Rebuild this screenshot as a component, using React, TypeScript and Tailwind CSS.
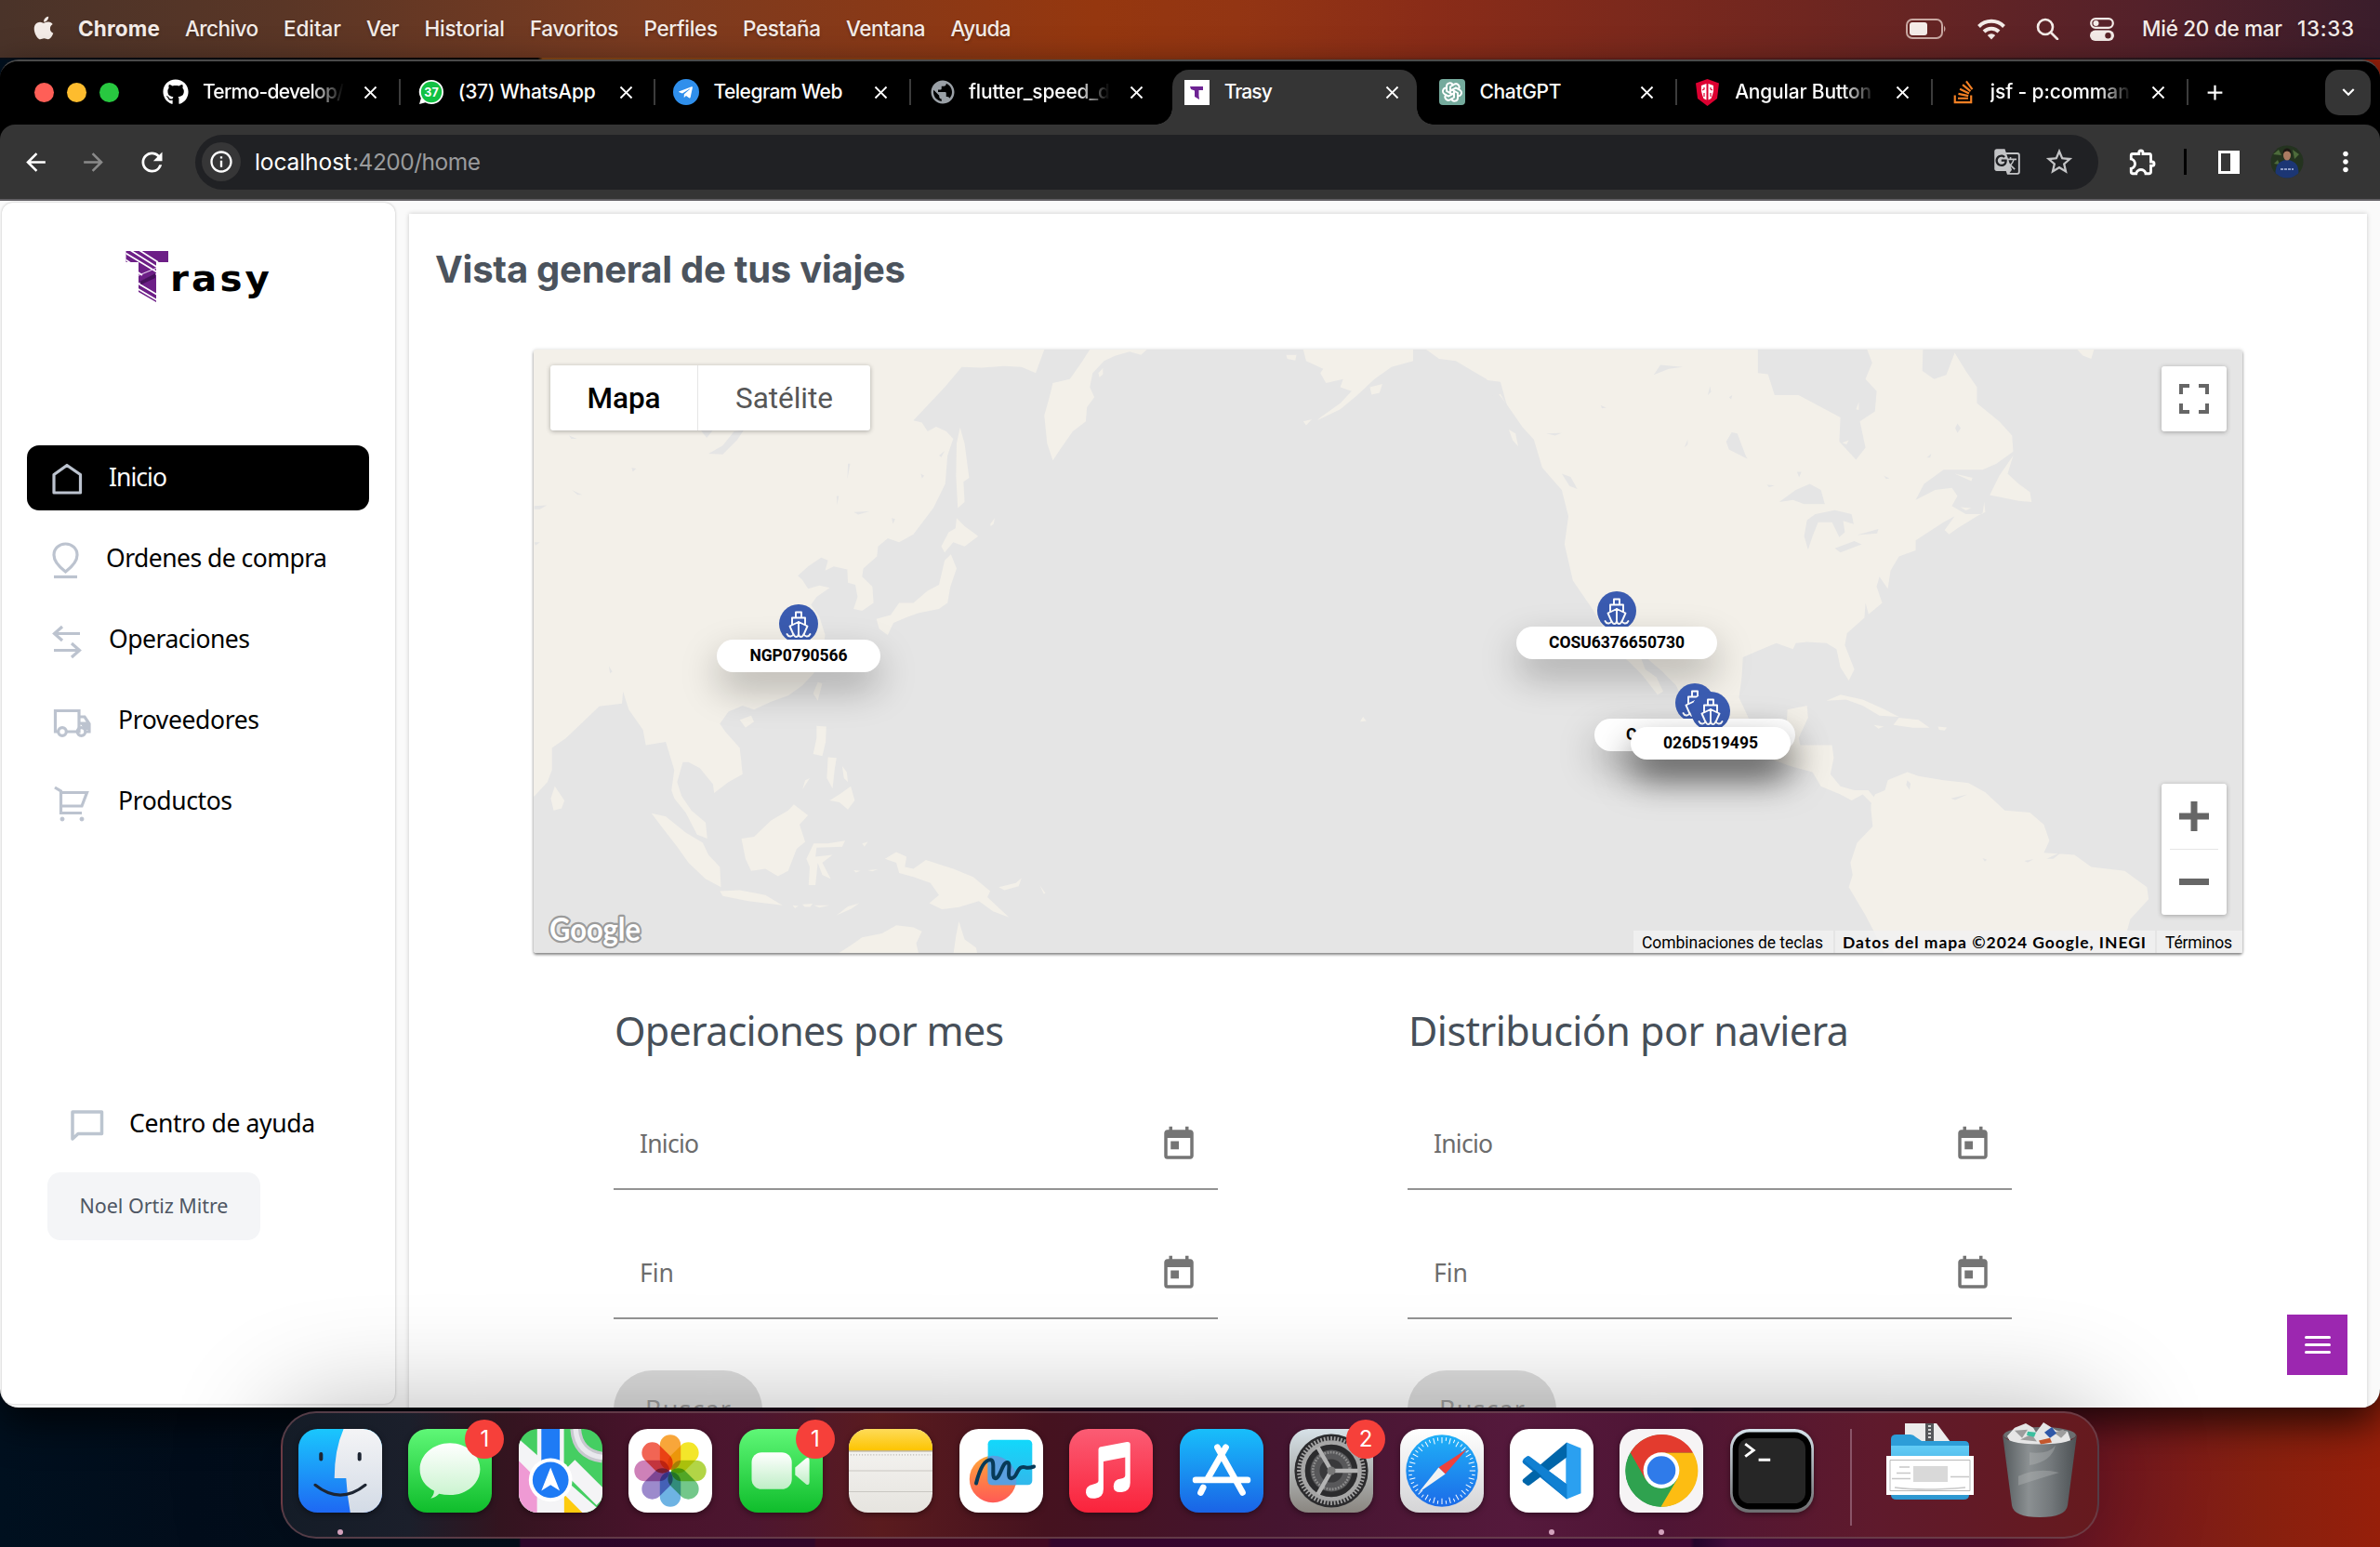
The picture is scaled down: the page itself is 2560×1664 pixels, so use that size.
import React, { useLayoutEffect, useRef, useState } from "react";
import { FaApple, FaGithub, FaTelegramPlane, FaStackOverflow } from "react-icons/fa";
import { TbBrandOpenai } from "react-icons/tb";
import {
  MdGTranslate,
  MdStarBorder,
  MdOutlineExtension,
  MdArrowBack,
  MdArrowForward,
  MdRefresh,
  MdInfoOutline,
  MdClose,
  MdAdd,
  MdKeyboardArrowDown,
  MdMoreVert,
  MdToday,
  MdPublic,
} from "react-icons/md";

/** A single line of text whose letter spacing is adjusted to fill a given width. */
function Fit({ w, className = "", children }: { w: number; className?: string; children: string }) {
  const ref = useRef<HTMLSpanElement>(null);
  const [ls, setLs] = useState(0);
  useLayoutEffect(() => {
    const el = ref.current;
    if (!el) return;
    const natural = el.getBoundingClientRect().width;
    setLs((w - natural) / Math.max(1, children.length - 1));
  }, [w, children]);
  return (
    <span className={`block shrink-0 ${className}`} style={{ width: w }}>
      <span ref={ref} className="inline-block whitespace-pre" style={{ letterSpacing: ls }}>
        {children}
      </span>
    </span>
  );
}

/* ------------------------------ menu bar ------------------------------ */

const menus: [string, number][] = [
  ["Archivo", 79],
  ["Editar", 62],
  ["Ver", 35.5],
  ["Historial", 86.5],
  ["Favoritos", 95.5],
  ["Perfiles", 79.5],
  ["Pestaña", 84],
  ["Ventana", 85.5],
  ["Ayuda", 65],
];

function MenuBar() {
  return (
    <div className="flex h-[62px] shrink-0 items-center justify-between bg-[linear-gradient(90deg,#4a3329_0%,#5a3626_12%,#7b3b20_27%,#95370f_46%,#933513_52%,#8a2c18_60%,#6f2620_76%,#54212a_90%,#3a1d2b_100%)] pl-[33px] pr-[28px] text-[22.5px] font-medium text-[#f4ece8] [text-shadow:0_2px_3px_rgba(0,0,0,0.25)]">
      <div className="flex items-center">
        <FaApple className="mb-[3px] size-[28px]" />
        <div className="ml-[23px] flex gap-[27px]">
          <Fit w={88} className="font-bold">Chrome</Fit>
          {menus.map(([m, w]) => (
            <Fit key={m} w={w}>{m}</Fit>
          ))}
        </div>
      </div>
      <div className="flex items-center">
        <svg width="44" height="22" viewBox="0 0 44 22" fill="none">
          <rect x="1" y="1" width="38" height="20" rx="6" stroke="#c9a8a2" strokeWidth="2" />
          <rect x="4" y="4" width="19" height="14" rx="3" fill="#f4ece8" />
          <path d="M41 7.500q3 3.500 0 7z" fill="#c9a8a2" />
        </svg>
        <svg width="32" height="24" viewBox="0 0 32 24" className="ml-[32px]" fill="none" stroke="#f4ece8" strokeWidth="4">
          <path d="M2.500 9.500a19 19 0 0 1 27 0" />
          <path d="M8 15a11.500 11.500 0 0 1 16 0" />
          <path d="M11.800 19a6 6 0 0 1 8.400 0L16 23.500z" fill="#f4ece8" stroke="none" />
        </svg>
        <svg width="25" height="24" viewBox="0 0 25 24" className="ml-[32px]" fill="none" stroke="#f4ece8" strokeWidth="2.600">
          <circle cx="10" cy="10" r="8" />
          <path d="M16 16l7 7" strokeLinecap="round" />
        </svg>
        <svg width="26" height="25" viewBox="0 0 26 25" className="ml-[33px]">
          <rect x="1.200" y="1.200" width="23.600" height="9.600" rx="4.800" fill="none" stroke="#f4ece8" strokeWidth="2.200" />
          <circle cx="6.500" cy="6" r="3" fill="#f4ece8" />
          <rect x="0" y="13.500" width="26" height="11.500" rx="5.700" fill="#f4ece8" />
          <circle cx="19.500" cy="19.200" r="3.200" fill="#5a2427" />
        </svg>
        <Fit w={151} className="ml-[30px]">Mié 20 de mar</Fit>
        <Fit w={61} className="ml-[16px]">13:33</Fit>
      </div>
    </div>
  );
}

/* ------------------------------ browser ------------------------------- */

type TabData = { icon: React.ReactNode; title: string; w: number; fade?: boolean; active?: boolean; sep?: boolean };

const tabs: TabData[] = [
  { icon: <FaGithub className="size-[28px] text-white" />, title: "Termo-develop/", w: 152, fade: true, sep: true },
  {
    icon: (
      <svg width="28" height="28" viewBox="0 0 28 28">
        <path d="M14 1a13 13 0 0 1 0 26q-3.500 0-6.500-1.700L1 27l1.800-6.200A13 13 0 0 1 14 1z" fill="#fff" />
        <circle cx="14" cy="14" r="11.200" fill="#12c143" />
        <text x="14" y="18.500" fontSize="12.500" fontWeight="700" fontFamily="Inter" fill="#fff" textAnchor="middle">37</text>
      </svg>
    ),
    title: "(37) WhatsApp",
    w: 148,
    sep: true,
  },
  {
    icon: (
      <span className="flex size-[28px] items-center justify-center rounded-full bg-[#2f8fec]">
        <FaTelegramPlane className="mr-[2px] size-[17px] text-white" />
      </span>
    ),
    title: "Telegram Web",
    w: 139,
    sep: true,
  },
  { icon: <MdPublic className="size-[30px] text-[#9aa0a6]" />, title: "flutter_speed_d", w: 152, fade: true },
  {
    icon: (
      <svg width="27" height="27" viewBox="0 0 27 27">
        <rect width="27" height="27" fill="#fff" />
        <path d="M6 7h14v4h-4.500v6l.5 4-5-3v-6.500L7 10z" fill="#6d2393" />
      </svg>
    ),
    title: "Trasy",
    w: 52,
    active: true,
  },
  {
    icon: (
      <span className="flex size-[28px] items-center justify-center rounded-[4px] bg-[#74aa9c]">
        <TbBrandOpenai className="size-[24px] text-white" />
      </span>
    ),
    title: "ChatGPT",
    w: 88,
    sep: true,
  },
  {
    icon: (
      <svg width="27" height="29" viewBox="0 0 27 29">
        <path d="M13.500 0L26 4.500 24 21l-10.500 8L3 21 1 4.500z" fill="#dd0031" />
        <path d="M7 7l5.500-2v17.500L9.500 21 8 17l-1-4zM20 7l-5.500-2v17.500l3-1.500 1.500-4 1-4z" fill="#fff" />
        <path d="M10 9v2l-2 1M17 9v2l2 1M10 15v4M17 15v4" stroke="#dd0031" strokeWidth="1.200" fill="none" />
      </svg>
    ),
    title: "Angular Button",
    w: 147,
    fade: true,
    sep: true,
  },
  { icon: <FaStackOverflow className="size-[28px] text-[#f48024]" />, title: "jsf - p:comman", w: 150, fade: true, sep: true },
];

function Tab({ t }: { t: TabData }) {
  return (
    <div className="relative flex h-full w-[274.700px] shrink-0 items-center">
      {t.active && (
        <div className="absolute bottom-0 left-[6px] right-[5px] top-[9px] rounded-t-[18px] bg-[#353535]">
          <div className="absolute -left-[18px] bottom-0 size-[18px] bg-[radial-gradient(circle_at_0_0,transparent_17.500px,#353535_18px)]" />
          <div className="absolute -right-[18px] bottom-0 size-[18px] bg-[radial-gradient(circle_at_100%_0,transparent_17.500px,#353535_18px)]" />
        </div>
      )}
      <div className="relative mb-[2px] flex w-full items-center">
        <div className="ml-[19px] flex w-[30px] shrink-0 items-center">{t.icon}</div>
        <div className={`ml-[13px] w-[152px] shrink-0 text-white ${t.fade ? "[mask-image:linear-gradient(90deg,#000_76%,transparent_100%)]" : ""}`}>
          <Fit w={t.w}>{t.title}</Fit>
        </div>
        <MdClose className="ml-[17px] size-[23px] shrink-0 text-white" />
        {t.sep && <div className="ml-auto h-[28px] w-[2px] shrink-0 bg-[#3c3c3c]" />}
      </div>
    </div>
  );
}

function TabStrip() {
  return (
    <div className="flex h-[68px] shrink-0 items-center bg-black text-[21px] font-medium">
      <div className="mb-[2px] flex w-[156px] shrink-0 gap-[14px] pl-[37px]">
        <span className="size-[21px] rounded-full bg-[#ff5f57]" />
        <span className="size-[21px] rounded-full bg-[#febc2e]" />
        <span className="size-[21px] rounded-full bg-[#28c840]" />
      </div>
      {tabs.map((t) => (
        <Tab key={t.title} t={t} />
      ))}
      <MdAdd className="mb-[2px] ml-[15px] size-[27px] text-white" />
      <div className="mb-[2px] ml-auto mr-[10px] flex size-[49px] items-center justify-center rounded-[15px] bg-[#353535]">
        <MdKeyboardArrowDown className="size-[26px] text-white" />
      </div>
    </div>
  );
}

function Toolbar() {
  return (
    <div className="flex h-[80px] shrink-0 items-center rounded-t-[16px] bg-[#353535] text-white">
      <MdArrowBack className="ml-[23px] size-[31px]" />
      <MdArrowForward className="ml-[31px] size-[31px] text-[#8a8a8a]" />
      <MdRefresh className="ml-[31px] size-[33px]" />
      <div className="ml-[30px] flex h-[59px] w-[2047px] shrink-0 items-center rounded-full bg-[#202124]">
        <span className="ml-[7px] flex size-[42px] items-center justify-center rounded-full bg-[#363637]">
          <MdInfoOutline className="size-[28px]" />
        </span>
        <Fit w={104} className="ml-[15px] text-[24.500px]">localhost</Fit>
        <Fit w={138} className="ml-[1px] text-[24.500px] text-[#9a9b9d]">:4200/home</Fit>
        <MdGTranslate className="ml-auto size-[30px] text-[#c3c4c6]" />
        <MdStarBorder className="ml-[24px] mr-[25px] size-[34px] text-[#c3c4c6]" />
      </div>
      <MdOutlineExtension className="ml-[31px] size-[34px]" />
      <span className="ml-[27px] h-[28px] w-[3px] bg-black" />
      <svg width="27" height="27" viewBox="0 0 27 27" className="ml-[32px]">
        <path fillRule="evenodd" d="M2 1h23v25H2zM5 4v19h10V4z" fill="#fff" />
      </svg>
      <svg width="36" height="36" viewBox="0 0 36 36" className="ml-[31px]">
        <clipPath id="avatar"><circle cx="18" cy="18" r="17.500" /></clipPath>
        <g clipPath="url(#avatar)">
          <rect width="36" height="36" fill="#24331f" />
          <path d="M3 10l6-5 3 6zM24 5l7 5-5 5zM4 20l4-4 2 5z" fill="#4d6b3b" />
          <path d="M6 36q-3-19 12-20 15 1 12 20z" fill="#1c3674" />
          <ellipse cx="18" cy="11" rx="4" ry="5.500" fill="#a97a62" />
          <path d="M13.500 9.500q0-6 4.500-6t4.500 6q-2-3-4.500-3t-4.500 3z" fill="#1d1613" />
          <path d="M11 26h14" stroke="#8f9fc8" strokeWidth="2" strokeDasharray="3 1" />
        </g>
      </svg>
      <MdMoreVert className="ml-[28px] size-[34px]" />
    </div>
  );
}

/* ------------------------------ sidebar ------------------------------- */

const stroke = { fill: "none", stroke: "#bcc3cf", strokeWidth: 3.2 } as const;

const nav = [
  {
    label: "Inicio", w: 63, gap: "ml-[16px]", active: true,
    icon: <path d="M2 13.500L16 3.500l14.500 10V33H2z" strokeLinejoin="round" {...stroke} />,
  },
  {
    label: "Ordenes de compra", w: 238, gap: "ml-[13px]",
    icon: (
      <g {...stroke}>
        <path d="M14.500 31Q2 21.500 2 13C2 6 7.500 1 14.500 1S27 6 27 13q0 8.500-12.500 18z" />
        <path d="M2 36.500h25" />
      </g>
    ),
  },
  {
    label: "Operaciones", w: 152, gap: "ml-[16px]",
    icon: (
      <g {...stroke}>
        <path d="M30 10.500H3M11 3l-8.500 7.500L11 18M2 28.500h27M21 21l8.500 7.500L21 36" />
      </g>
    ),
  },
  {
    label: "Proveedores", w: 152, gap: "ml-[26px]",
    icon: (
      <g {...stroke}>
        <path d="M8 29H3.500V6.500H29V29H15M29 13h6l5 7.500V29h-3M29 20h10" />
        <circle cx="11" cy="29" r="4.300" />
        <circle cx="31.500" cy="29" r="4.300" />
        <path d="M31 21h9v6h-5z" fill="#bcc3cf" stroke="none" />
      </g>
    ),
  },
  {
    label: "Productos", w: 123, gap: "ml-[26px]",
    icon: (
      <g {...stroke}>
        <path d="M3 2l6.500 4V29.500H32M9.500 7.500h28L32 22H10" />
        <circle cx="11" cy="36" r="2" fill="#bcc3cf" strokeWidth="1" />
        <circle cx="32" cy="36" r="2" fill="#bcc3cf" strokeWidth="1" />
      </g>
    ),
  },
];

function Logo() {
  return (
    <svg width="180" height="75" viewBox="0 0 180 75" className="ml-[123px] mt-[42px] shrink-0">
      <clipPath id="tee"><path d="M10.500 10H56v12H43v43l-19-11V22H10.500z" /></clipPath>
      <g clipPath="url(#tee)">
        <path d="M10 10H56v12H43v44H24V22H10z" fill="#6d1f87" />
        <g stroke="#fff" strokeWidth="1.700">
          <path d="M8 11l38 23M15 9l30 19M23 8l22 14M8 18l12 8M22 44l22 13M22 50l22 13M22 32l6 4" />
          <path d="M22 37l22-9M22 46l22-12" stroke="#e3c9ec" strokeWidth="1.200" />
        </g>
        <path d="M25 43l17-9v5l-15 7z" fill="#46115c" />
      </g>
      <text x="58" y="53" fontFamily="DejaVu Sans" fontSize="39" fontWeight="700" textLength="110" lengthAdjust="spacingAndGlyphs" letterSpacing="3" fill="#000">
        rasy
      </text>
    </svg>
  );
}

function Sidebar() {
  return (
    <aside className="ml-[2px] mt-[2px] flex h-[1292px] w-[423px] shrink-0 flex-col rounded-[12px] bg-white font-['Noto_Sans',sans-serif] text-[26.500px] text-black shadow-[0_0_3px_rgba(0,0,0,0.25)]">
      <Logo />
      <nav className="ml-[27px] mt-[144px] flex flex-col gap-[17px]">
        {nav.map((n) => (
          <div key={n.label} className={`flex h-[70px] w-[368px] items-center rounded-[13px] pl-[27px] ${n.active ? "bg-black text-white" : ""}`}>
            <svg width="45" height="40" viewBox="0 0 45 40" className="mt-[5px] shrink-0 overflow-visible">{n.icon}</svg>
            <Fit w={n.w} className={n.gap}>{n.label}</Fit>
          </div>
        ))}
      </nav>
      <div className="ml-[74px] mt-[292px] flex h-[40px] items-center">
        <svg width="36" height="36" viewBox="0 0 36 36" className="mt-[3px]">
          <path d="M2 32V3h31.500v23.500H8z" fill="none" stroke="#bcc5d0" strokeWidth="3.500" strokeLinejoin="round" />
        </svg>
        <Fit w={200} className="ml-[27px]">Centro de ayuda</Fit>
      </div>
      <div className="ml-[49px] mt-[32px] flex h-[73px] w-[229px] items-center justify-center rounded-[14px] bg-[#f4f5f7] text-[21.500px] text-[#4f5764]">
        <Fit w={160}>Noel Ortiz Mitre</Fit>
      </div>
    </aside>
  );
}

/* -------------------------------- map --------------------------------- */

const west = [
  "M24 37H920L905 95 880 80 850 78 810 82 775 80 745 130 690 213 705 218 715 240 730 228 748 240 760 258 750 300 746 370 725 430 690 495 665 515 645 505 628 525 626 550 602 580 600 600 618 625 620 665 600 685 585 680 592 650 588 620 575 615 574 582 550 575 535 585 540 560 528 553 505 575 487 598 495 608 505 630 525 622 543 628 520 650 510 670 525 700 535 745 530 790 515 840 495 870 470 895 440 910 410 930 390 920 365 935 350 965 360 985 385 1025 390 1090 365 1110 340 1137 338 1115 315 1075 295 1060 285 1060 275 1110 283 1145 300 1180 325 1210 328 1250 310 1240 290 1185 270 1150 265 1130 270 1080 255 1010 220 1018 215 980 190 930 180 885 178 915 138 922 80 1000 55 1025 55 1080 47 1110 24 1145 20 1145V30z",
  "M60 1120L77 1155 72 1175 58 1180 53 1150z",
  "M772 230L780 270 788 355 778 365 780 415 768 430 765 350 766 270z",
  "M766 455L780 475 804 500 780 525 760 515 745 540 739 525 752 490 764 480z",
  "M756 545L766 580 755 625 750 665 735 680 700 690 680 700 655 715 645 745 630 730 625 705 650 695 665 665 690 665 715 635 735 620 745 560z",
  "M1000 37H1100L1090 50 1070 42 1045 52 1025 65 1005 95 1000 130 1008 155 995 180 993 215 970 240 950 280 935 312 925 270 920 200 930 150 935 120 965 110 985 70z",
  "M1015 95l8-12 0 15-6 8z",
  "M825 470l8-15-2 14-5 6z",
  "M1375 37H1568V65L1530 80 1500 110 1470 150 1440 185 1400 212 1405 205 1440 170 1460 140 1440 130 1445 110 1415 120 1405 95 1410 85 1380 65z",
  "M1375 215l15-5-10 15zM1345 50l18 0-2 14-14-4zM1492 130l22-8-5 22-14 5z",
  "M522 862L530 865 522 908 514 890zM385 955L405 945 410 960 395 975z",
  "M520 970L537 972 536 1010 530 1045 514 1040 520 1000z",
  "M540 1048L555 1050 552 1075 548 1125 538 1100zM565 1070L573 1085 575 1110 568 1100zM580 1120L587 1155 575 1178 560 1160 543 1155 560 1140zM500 1105L508 1100 495 1128z",
  "M480 1165L505 1192 490 1215 500 1258 485 1275 470 1330 452 1343 430 1325 405 1330 395 1300 388 1250 410 1245 440 1205 470 1180z",
  "M230 1187L255 1195 290 1235 320 1260 330 1290 350 1320 352 1370 325 1350 295 1310 275 1270 245 1215z",
  "M350 1380L385 1378 430 1390 460 1415 400 1405 355 1392z",
  "M515 1262L540 1262 570 1255 565 1270 520 1272 518 1295 548 1290 530 1310 545 1350 530 1340 522 1310 518 1365 506 1365 508 1320 502 1300z",
  "M478 1415l10 2-6 6zM495 1413l18-2-4 8-10 0zM515 1415l28 0-18 6zM555 1440l20-22 20-8-14 14zM585 1328l12 2-8 4zM610 1328l18-2-10 5zM600 1262l10-4-6 12z",
  "M640 1300L660 1283 678 1295 675 1320 690 1325 712 1303 760 1325 795 1345 825 1380 820 1395 858 1445 830 1430 805 1405 770 1420 740 1425 718 1410 735 1390 720 1360 690 1345 665 1335 660 1310z",
  "M840 1370L870 1360 880 1348 875 1368 850 1378zM912 1365l10 20-3 2z",
  "M560 1533L585 1510 600 1495 635 1485 660 1465 690 1470 705 1480 695 1510 700 1540H560z",
  "M770 1455L780 1500 800 1520 803 1540H760L765 1490zM1475 960l5-12 6 10z",
];

const westWater = [
  "M330 295L355 275 375 240 392 237 380 262 355 297z",
  "M317 238l10 18 10-18z",
  "M575 320l4 0-5 38zM555 400l4 0-3 22zM585 440l28-2-20 8zM652 455l6 2-4 12zM195 330l8 2-6 8zM90 385l18 12-8 0zM24 425l22-2-12 10-10 0zM155 822l6 14-4 4zM735 300l10-12-6 16zM24 515l10 0-8 8zM85 250l14 8-10 0zM703 345l6 5-4 6z",
];

const east = [
  "M-10 37H28V50L0 75H-10z",
  "M57 37H652V95L670 98 682 150 725 150 800 205 798 265 828 310 845 280 835 215 862 190 865 140 845 110 857 70 848 37H948L947 90 968 110 990 100 1005 45 1025 90 1045 130 1045 170 1085 215 1108 250 1110 290 1080 320 1055 335 985 335 950 370 935 410 970 385 1000 380 1010 400 1000 425 1025 445 1055 445 1058 415 1060 440 1045 450 1010 480 995 495 987 485 1005 450 985 465 935 510 935 535 905 550 890 585 885 630 870 600 865 625 875 665 845 700 812 740 808 770 825 830 815 858 800 825 793 780 775 765 740 762 720 765 715 780 685 765 650 785 625 800 623 850 618 900 635 950 640 1000 680 1005 703 980 705 930 740 920 742 950 725 1000 728 1018 785 1018 788 1050 782 1090 800 1120 825 1130 850 1130 862 1150 858 1165 840 1140 820 1155 800 1140 765 1120 750 1085 710 1070 650 1040 560 1000 530 940 505 870 480 835 455 805 440 795 450 830 470 850 482 885 472 893 445 845 420 810 400 790 355 680 320 610 305 520 312 450 300 385 265 330 250 260 230 230 200 170 165 110 140 90 110 65 80 60z",
  "M1110 300L1100 345 1120 370 1140 390 1143 415 1120 412 1068 398 1085 350z",
  "M1005 345l32 10-2 8zM1015 428l20 2-10 6zM1225 37H1255L1250 60 1235 52z",
  "M775 908L800 893 840 905 880 930 905 948 870 945 840 920 810 905zM905 950L940 955 960 975 930 975 895 968zM860 968l18 4-10 5zM975 972l16 2-4 8-10-2z",
  "M855 1165L862 1140 880 1130 885 1105 920 1085 940 1095 985 1105 1030 1112 1060 1135 1095 1180 1140 1185 1165 1215 1175 1255 1165 1285 1220 1290 1250 1320 1310 1330 1350 1370 1353 1400 1320 1450 1310 1500 1320 1540H880L860 1480 845 1440 815 1370 822 1340 818 1310 830 1260 858 1220 855 1180z",
  "M205 235l12 10 5 32-10-15z",
  "M828 185l5-18 0 20zM803 268l12-6-4 10z",
];

const eastWater = [
  "M690 415L720 385 745 370 765 385 772 420 735 420 715 410z",
  "M735 500L740 460 755 445 790 435 820 445 824 470 805 462 808 490 798 502 785 465 760 465 750 500 742 533z",
  "M790 530L825 512 838 520 800 540zM830 497L868 482 866 493z",
  "M605 242L615 245 630 300 633 308 600 285 595 265z",
  "M465 100l12-25 40 5-25 5zM562 150l4-22 2 14zM600 155l6-5-2 10zM370 175l10 6-8 2zM520 280l6-20 0 12zM608 325l6 10zM722 340l8 0-4 14zM668 372l14 2-10 4zM1010 220l6 12-6 12-4-12zM878 350l10 6-6 2zM955 305l8-10-2 10zM272 245l28-1-12 6zM920 1105l6 8-2 16-6-12zM998 1150l30-10-22 14zM1055 1298l8 4-4 5zM1130 1305l16-4-10 8zM1170 1300l28-18-16 18z",
  "M300 345l16 8 12 30-14-8z",
  "M160 112l30 5 12 60-12-30-14 5z",
  "M845 665l6 30-8 8z",
];

function Ship() {
  return (
    <svg width="42" height="42" viewBox="0 0 42 42">
      <circle cx="21" cy="21" r="21" fill="#3a5bb0" />
      <g fill="none" stroke="#fff" strokeWidth="1.900" strokeLinejoin="round" strokeLinecap="round">
        <path d="M18 14V8.500h6V14M14 22v-7.500h14V22M21 19v12M21 19l-9.500 4.500 3.500 8M21 19l9.500 4.500-3.500 8" />
        <path d="M8.500 32q1.500 3 4 2.500t3-2.500q1 3 3 3t2.500-3q.5 3 2.500 3t3-3q.5 2 3 2.500t4-2.500" />
      </g>
    </svg>
  );
}

function Marker({ label, tw, className, pill }: { label: string; tw: number; className: string; pill: string }) {
  return (
    <div className={`absolute flex flex-col items-center ${className}`}>
      <Ship />
      <div className={`relative -mt-[4px] flex h-[35px] items-center rounded-full bg-white ${pill}`}>
        <Fit w={tw} className="text-[17.500px] font-bold text-black">{label}</Fit>
      </div>
    </div>
  );
}

function WorldMap() {
  return (
    <div className="relative ml-[134px] mt-[22px] h-[649px] w-[1838px] shrink-0 rounded-[3px] font-[Roboto,sans-serif] shadow-[0_2px_3px_rgba(0,0,0,0.45),0_0_4px_rgba(0,0,0,0.12)]">
      <svg width="1838" height="649" viewBox="0 0 1838 649" className="rounded-[3px]">
        <rect width="1838" height="649" fill="#e5e5e5" />
        <g transform="translate(-14 -16) scale(.61224 .43367)">
          {west.map((d) => <path key={d} d={d} fill="#f3f0e9" />)}
          {westWater.map((d) => <path key={d} d={d} fill="#e5e5e5" />)}
        </g>
        <g transform="translate(926 -16) scale(.5995 .43367)">
          {east.map((d) => <path key={d} d={d} fill="#f3f0e9" />)}
          {eastWater.map((d) => <path key={d} d={d} fill="#e5e5e5" />)}
        </g>
      </svg>

      <div className="absolute left-[18px] top-[17px] flex h-[70px] rounded-[3px] bg-white text-[31.500px] shadow-[0_1px_5px_rgba(0,0,0,0.3)]">
        <div className="flex w-[159px] items-center justify-center border-r border-[#e6e6e6] pt-[1px] font-medium text-black">
          <Fit w={79}>Mapa</Fit>
        </div>
        <div className="flex w-[185px] items-center justify-center pt-[1px] text-[#565656]">
          <Fit w={105}>Satélite</Fit>
        </div>
      </div>

      <div className="absolute right-[17px] top-[18px] flex size-[70px] items-center justify-center rounded-[3px] bg-white shadow-[0_1px_5px_rgba(0,0,0,0.3)]">
        <svg width="32" height="32" viewBox="0 0 32 32" fill="none" stroke="#666" strokeWidth="4">
          <path d="M2 11V2h9M21 2h9v9M30 21v9h-9M11 30H2v-9" />
        </svg>
      </div>

      <div className="absolute right-[17px] top-[467px] flex h-[141px] w-[70px] flex-col items-center rounded-[3px] bg-white shadow-[0_1px_5px_rgba(0,0,0,0.3)]">
        <div className="flex h-[70px] items-center">
          <svg width="32" height="32" viewBox="0 0 32 32"><path d="M12.500 0h7v12.500H32v7H19.500V32h-7V19.500H0v-7h12.500z" fill="#666" /></svg>
        </div>
        <div className="h-[2px] w-[52px] bg-[#e6e6e6]" />
        <div className="flex h-[70px] items-center">
          <svg width="32" height="8" viewBox="0 0 32 8"><path d="M0 0h32v7H0z" fill="#666" /></svg>
        </div>
      </div>

      <Marker label="NGP0790566" tw={105} className="left-[197px] top-[274px]" pill="w-[176px] justify-center shadow-[0_18px_40px_rgba(0,0,0,0.28)]" />
      <Marker label="COSU6376650730" tw={146} className="left-[1057px] top-[260px]" pill="w-[216px] justify-center shadow-[0_18px_40px_rgba(0,0,0,0.28)]" />
      <Marker label="C" tw={12} className="left-[1141px] top-[359px]" pill="w-[216px] pl-[34px] shadow-[0_18px_40px_rgba(0,0,0,0.28)]" />
      <Marker label="026D519495" tw={102} className="left-[1180px] top-[368px]" pill="w-[172px] justify-center shadow-[0_20px_38px_rgba(0,0,0,0.58)]" />

      <svg width="120" height="50" viewBox="0 0 120 50" className="absolute bottom-0 left-[10px]">
        <text x="7" y="37" fontFamily="Lato" fontSize="34" fontWeight="700" textLength="98" lengthAdjust="spacingAndGlyphs" fill="#fff" stroke="#9b9b9b" strokeWidth="4.500" strokeLinejoin="round" paintOrder="stroke">
          Google
        </text>
      </svg>

      <div className="absolute bottom-0 right-0 flex h-[24px] items-center bg-[#f1f1f1]/80 text-[17.500px] leading-[26px] text-black">
        <Fit w={195} className="ml-[9px] mt-[2px]">Combinaciones de teclas</Fit>
        <span className="ml-[11px] h-full w-[2px] bg-[#e5e5e5]" />
        <Fit w={326} className="ml-[8px] mt-[2px] font-['Lato',sans-serif] font-bold">Datos del mapa ©2024 Google, INEGI</Fit>
        <span className="ml-[10px] h-full w-[2px] bg-[#e5e5e5]" />
        <Fit w={72} className="ml-[9px] mr-[11px] mt-[2px]">Términos</Fit>
      </div>
    </div>
  );
}

/* ------------------------------ filters ------------------------------- */

function Field({ label, w, className }: { label: string; w: number; className: string }) {
  return (
    <div className={`flex h-[97px] items-center justify-between border-b-2 border-[#939393] pl-[28px] pr-[21px] text-[26.500px] text-[#6c6c6c] ${className}`}>
      <Fit w={w}>{label}</Fit>
      <MdToday className="size-[42px] text-[#757575]" />
    </div>
  );
}

function Filters({ title, w }: { title: string; w: number }) {
  return (
    <section className="w-[650px] shrink-0 font-['Noto_Sans',sans-serif]">
      <Fit w={w} className="ml-px h-[60px] text-[43px] leading-[61px] text-[#464f59]">{title}</Fit>
      <Field label="Inicio" w={64} className="mt-[45px]" />
      <Field label="Fin" w={37} className="mt-[42px]" />
      <button className="mt-[55px] flex h-[84px] w-[160px] items-center justify-center rounded-full bg-[#dedede] text-[27px] text-[#9b9b9b]">
        <Fit w={92}>Buscar</Fit>
      </button>
    </section>
  );
}

/* -------------------------------- dock -------------------------------- */

function AppIcon({ id, children }: { id: string; children: React.ReactNode }) {
  return (
    <svg width="90" height="90" viewBox="0 0 100 100" className="block drop-shadow-[0_2px_3px_rgba(0,0,0,0.4)]">
      <clipPath id={`clip-${id}`}><rect width="100" height="100" rx="23" /></clipPath>
      <g clipPath={`url(#clip-${id})`}>{children}</g>
    </svg>
  );
}

function Grad({ id, a, b }: { id: string; a: string; b: string }) {
  return (
    <linearGradient id={id} x1="0" y1="0" x2="0" y2="1">
      <stop offset="0" stopColor={a} />
      <stop offset="1" stopColor={b} />
    </linearGradient>
  );
}

const petals = ["#f79a1e", "#f2e30c", "#a8cf2c", "#5fbf7a", "#5aa9e0", "#8e7ac5", "#c76fae", "#f0503c"];
const ticks = Array.from({ length: 48 }, (_, i) => i * 7.5);
const teeth = Array.from({ length: 60 }, (_, i) => i * 6);

const apps: { id: string; art: React.ReactNode; badge?: string; dot?: boolean }[] = [
  {
    id: "finder", dot: true,
    art: (
      <>
        <Grad id="g-fi" a="#1ac7fd" b="#1e68f3" />
        <Grad id="g-fi2" a="#f4f4f6" b="#d3dbe6" />
        <rect width="100" height="100" fill="url(#g-fi)" />
        <path d="M54 0Q43 25 43 59h14q1 20 5 41h40V0z" fill="url(#g-fi2)" />
        <g fill="none" stroke="#1d2532" strokeWidth="4.500" strokeLinecap="round">
          <path d="M27 30v6M73 30v6" />
          <path d="M20 67q30 24 60 0" strokeWidth="3.500" />
        </g>
      </>
    ),
  },
  {
    id: "messages", badge: "1",
    art: (
      <>
        <Grad id="g-me" a="#5ff777" b="#0fbd2b" />
        <Grad id="g-me2" a="#ffffff" b="#c8f3cd" />
        <rect width="100" height="100" fill="url(#g-me)" />
        <path d="M50 17c20 0 36 14 36 31S70 79 50 79q-7 0-13-1.500Q33 82 27 83q4-4 4-9-17-9-17-26c0-17 16-31 36-31z" fill="url(#g-me2)" />
      </>
    ),
  },
  {
    id: "maps",
    art: (
      <>
        <rect width="100" height="100" fill="#45ce62" />
        <path d="M0 12L100 100H0z" fill="#f4f4f6" />
        <path d="M0 38L22 60V100H0z" fill="#ef9ad4" />
        <path d="M54 78L76 100H54z" fill="#fecb0e" />
        <path d="M60 44L100 84" stroke="#f4f4f6" strokeWidth="20" />
        <path d="M68 0q2 30 32 34" stroke="#c8c8cf" strokeWidth="13" fill="none" />
        <path d="M68 0q2 30 32 34" stroke="#e9e9ee" strokeWidth="6" fill="none" />
        <path d="M22 0h32v100H22z" fill="#f4f4f6" />
        <path d="M27 0h22v55H27z" fill="#1e7bf5" />
        <circle cx="38" cy="61" r="26" fill="#fff" />
        <circle cx="38" cy="61" r="21.500" fill="#1e7bf5" />
        <path d="M38 46l11 28-11-7-11 7z" fill="#fff" />
      </>
    ),
  },
  {
    id: "photos",
    art: (
      <>
        <rect width="100" height="100" fill="#fff" />
        <g className="[mix-blend-mode:multiply]">
          {petals.map((c, i) => (
            <rect key={c} x="37.500" y="7" width="25" height="42" rx="12.500" fill={c} opacity=".88" transform={`rotate(${i * 45} 50 50)`} className="[mix-blend-mode:multiply]" />
          ))}
        </g>
      </>
    ),
  },
  {
    id: "facetime", badge: "1",
    art: (
      <>
        <Grad id="g-fa2" a="#ffffff" b="#bfeec6" />
        <rect width="100" height="100" fill="url(#g-me)" />
        <rect x="15" y="28" width="48" height="44" rx="12" fill="url(#g-fa2)" />
        <path d="M67 46l13-11q4-2 4 3v25q0 5-4 3L67 55z" fill="url(#g-fa2)" />
      </>
    ),
  },
  {
    id: "notes",
    art: (
      <>
        <Grad id="g-no" a="#fedb59" b="#fdc400" />
        <Grad id="g-no2" a="#f7f6f4" b="#e6e4df" />
        <rect width="100" height="100" fill="url(#g-no2)" />
        <rect width="100" height="26" fill="url(#g-no)" />
        <path d="M0 26.500h100" stroke="#b5a98c" strokeWidth="1.500" />
        <path d="M2 31h96" stroke="#b9b7b2" strokeWidth="1.600" strokeDasharray="1.200 2.200" />
        <path d="M0 50h100M0 75h100" stroke="#c9c7c2" strokeWidth="1.300" />
      </>
    ),
  },
  {
    id: "freeform",
    art: (
      <>
        <Grad id="g-fr" a="#ffa63a" b="#ff5a55" />
        <Grad id="g-fr2" a="#06d6fb" b="#27b4ea" />
        <rect width="100" height="100" fill="#fff" />
        <circle cx="40" cy="60" r="28" fill="url(#g-fr)" />
        <rect x="34" y="13" width="53" height="54" rx="5" fill="url(#g-fr2)" opacity=".95" />
        <path d="M40 32a28 28 0 0 1 28 28v7H39q-5 0-5-5V33z" fill="#5a9fe0" />
        <path d="M20 65q7-28 17-28c7 0 0 22 6 22s8-19 14-19-2 19 5 19 6-11 12-13 4 3 15-1" fill="none" stroke="#073a58" strokeWidth="4.500" strokeLinecap="round" />
      </>
    ),
  },
  {
    id: "music",
    art: (
      <>
        <Grad id="g-mu" a="#fb5c74" b="#fa233b" />
        <rect width="100" height="100" fill="url(#g-mu)" />
        <path d="M35 25q0-3 3-3.500l31-6q4-.5 4 3v46q0 10-10 11t-10-7 9-9q5-1 5-4V34l-26 5v33q0 10-10 11t-11-7 9-10q6-1 6-4z" fill="#fff" />
      </>
    ),
  },
  {
    id: "appstore",
    art: (
      <>
        <Grad id="g-as" a="#18bffb" b="#1a63e6" />
        <rect width="100" height="100" fill="url(#g-as)" />
        <g stroke="#fff" strokeWidth="7.500" strokeLinecap="round">
          <path d="M55 22L33 60M45 22l30 54M19 61h62M28 70l-3 6" />
        </g>
      </>
    ),
  },
  {
    id: "settings", badge: "2",
    art: (
      <>
        <Grad id="g-se" a="#d7e2e8" b="#8a8680" />
        <rect width="100" height="100" fill="url(#g-se)" />
        <circle cx="50" cy="50" r="44" fill="#2b2b2d" />
        {teeth.map((a) => <path key={a} d="M50 9v5" stroke="#a4a4a4" strokeWidth="2" transform={`rotate(${a} 50 50)`} />)}
        <circle cx="50" cy="50" r="34" fill="none" stroke="#a6a6a6" strokeWidth="5" />
        <circle cx="50" cy="50" r="25" fill="#58585a" />
        <circle cx="50" cy="50" r="22" fill="none" stroke="#8d8d8d" strokeWidth="3" strokeDasharray="2 1.500" />
        <circle cx="50" cy="50" r="14" fill="#39393b" />
        <path d="M50 50h32M50 50L34 22M50 50L34 78" stroke="#b4b4b4" strokeWidth="5" />
        <circle cx="50" cy="50" r="5" fill="#777" />
      </>
    ),
  },
  {
    id: "safari",
    art: (
      <>
        <Grad id="g-sa" a="#1fb0f7" b="#1c6be8" />
        <Grad id="g-sa2" a="#ffffff" b="#d4d4d6" />
        <rect width="100" height="100" fill="url(#g-sa2)" />
        <circle cx="50" cy="50" r="43" fill="url(#g-sa)" />
        {ticks.map((a, i) => <path key={a} d={i % 2 ? "M50 10v4" : "M50 10v7"} stroke="#fff" strokeWidth="1.100" transform={`rotate(${a} 50 50)`} />)}
        <path d="M80 24L46 46l8 8z" fill="#f0413c" />
        <path d="M22 76l24-30 8 8z" fill="#f2f2f2" />
      </>
    ),
  },
  {
    id: "vscode", dot: true,
    art: (
      <>
        <rect width="100" height="100" fill="#fff" />
        <path d="M68 16L85 23V77L68 84 67 82V18z" fill="#2ba0f0" />
        <path d="M68 84L16 41q-2-2 0-4l4-3q2-1.500 4 0L68 66z" fill="#0a74c4" />
        <path d="M68 16L16 60q-2 2 0 4l4 3q2 1.500 4 0L68 34z" fill="#0065a9" />
        <path d="M16 36l4-3q2-1.500 4 0L68 66v18z" fill="#1080d2" />
      </>
    ),
  },
  {
    id: "chrome", dot: true,
    art: (
      <>
        <rect width="100" height="100" fill="#f6f4f5" />
        <circle cx="50" cy="50" r="43" fill="#2fa24f" />
        <path d="M13 28.500A43 43 0 0 1 88 28.500H50L31 61z" fill="#e33b2e" />
        <path d="M50 28.500h38A43 43 0 0 1 49.500 93L69 60z" fill="#fdbd12" />
        <path d="M13 28.500L31.500 61l19 10.500L49.500 93A43 43 0 0 1 13 28.500z" fill="#2fa24f" />
        <circle cx="50" cy="49.500" r="21.500" fill="#fff" />
        <circle cx="50" cy="49.500" r="17" fill="#2f7bea" />
      </>
    ),
  },
  {
    id: "terminal",
    art: (
      <>
        <Grad id="g-te" a="#d5e2ea" b="#6d6d70" />
        <rect width="100" height="100" fill="url(#g-te)" />
        <rect x="3" y="4" width="94" height="92" rx="20" fill="#000" />
        <rect x="10" y="11" width="80" height="78" rx="13" fill="#262626" />
        <path d="M18 18l10 7.500L18 33" fill="none" stroke="#fff" strokeWidth="3.200" />
        <path d="M34 37h14" stroke="#fff" strokeWidth="3.200" />
      </>
    ),
  },
];

function Folder() {
  return (
    <svg width="96" height="84" viewBox="0 0 96 84">
      <Grad id="g-fo" a="#62ccf6" b="#2b95cf" />
      <path d="M21 0h34l18 24H21z" fill="#ececec" />
      <path d="M43 0h9v20h-9z" fill="#55575a" />
      <path d="M47.500 2v16" stroke="#d6d6d6" strokeWidth="3" strokeDasharray="2 2" />
      <path d="M6 17q0-5 6-5h15q3 0 6 3l6 4h46q5 0 5 5v12H6z" fill="#2d9dd8" />
      <path d="M6 24h84v53q0 5-6 5H12q-6 0-6-5z" fill="url(#g-fo)" />
      <rect x="1" y="35" width="94" height="42" fill="#fff" />
      <path d="M5 39.500h86v33H5z" fill="none" stroke="#b9b9b9" strokeWidth="1" />
      <path d="M30 46h37v17H30z" fill="#d9d9d9" />
      <path d="M7 59.500h20M12 53.500h15M15 47h11M70 57.500h20M10 69q30 4 76 0" stroke="#c8c8c8" strokeWidth="1.500" fill="none" />
    </svg>
  );
}

function Trash() {
  return (
    <svg width="82" height="104" viewBox="0 0 82 106" preserveAspectRatio="none">
      <linearGradient id="g-tr" x1="0" y1="0" x2="1" y2="0">
        <stop offset="0" stopColor="#555b5e" />
        <stop offset=".35" stopColor="#8b9092" />
        <stop offset=".65" stopColor="#73787b" />
        <stop offset="1" stopColor="#4c5154" />
      </linearGradient>
      <ellipse cx="41" cy="15" rx="39" ry="9" fill="#6b6e70" />
      <path d="M6 16l8-9 12-5 8 5 3 5 8-11 14 9 12 1 4 12-34 4L10 24z" fill="#e6e6e6" />
      <path d="M14 10l8 8 6-9zM56 12l8 6 6-6-4-3zM20 20l12-6 6 8z" fill="#9d9d9d" />
      <path d="M28 11l9 1-2 5-8-2z" fill="#3bbf9f" />
      <path d="M46 12l8-6 5 7-7 5z" fill="#2f58a8" />
      <path d="M40 21l12-3 2 5-12 2z" fill="#c4572c" />
      <path d="M1 14q3 11 40 11t40-11L71 92q-2 13-30 13T11 92z" fill="url(#g-tr)" />
      <path d="M30 34q22 2 28-8-4 18-28 22zM18 60q20-10 44-4-20 6-44 14z" fill="#b9bcbe" opacity=".35" />
    </svg>
  );
}

function Dock() {
  return (
    <div className="relative mx-auto mt-[4px] flex h-[137px] w-[1956px] shrink-0 items-start rounded-[38px] border-2 border-[#6f4a54]/70 bg-[linear-gradient(90deg,#141c27_0%,#1b1f2b_7%,#33141f_12%,#48132b_20%,#4d1630_26%,#5a1b1e_33%,#45121f_42%,#451530_55%,#55193c_68%,#4f1535_76%,#5f1a2c_88%,#661a1e_100%)] pl-[17px] pt-[17px] shadow-[0_0_120px_rgba(0,0,0,0.3)]">
      <div className="flex gap-[28.460px]">
        {apps.map((a) => (
          <div key={a.id} className="relative flex flex-col items-center">
            <AppIcon id={a.id}>{a.art}</AppIcon>
            {a.dot && <span className="mt-[18px] size-[6px] rounded-full bg-[#d3a3bd]" />}
            {a.badge && (
              <span className="absolute -right-[13px] -top-[10px] flex size-[42px] items-center justify-center rounded-full bg-[#f6403a] text-[24px] text-white">
                {a.badge}
              </span>
            )}
          </div>
        ))}
      </div>
      <span className="ml-[39px] h-[104px] w-[2px] bg-[#8a5468]" />
      <div className="-mt-[6px] ml-[36px]"><Folder /></div>
      <div className="-mt-[8px] ml-[29px]"><Trash /></div>
    </div>
  );
}

/* -------------------------------- page -------------------------------- */

export default function App() {
  return (
    <div className="flex h-[1664px] w-[2560px] flex-col overflow-hidden bg-[linear-gradient(90deg,#00101f_0%,#020d1b_8%,#04101d_21.800%,#330831_21.900%,#3a0930_34.200%,#4b0a26_34.300%,#4d0b28_44%,#3c0734_44.200%,#4a0a3c_71%,#2b0733_71.200%,#4d0d44_72.700%,#5a102f_84%,#741820_89%,#87200f_95%,#961f0a_100%)] font-['Inter',sans-serif]">
      <MenuBar />
      <div className="h-[2px] shrink-0 bg-[linear-gradient(90deg,#0a0f18_0%,#0d0705_22.600%,#8a4a17_22.800%,#933a12_46%,#6a1f1b_70%,#101522_100%)]" />
      <div className="flex h-[1450px] w-full shrink-0 flex-col overflow-hidden rounded-[20px] border-t-2 border-[#4a4a4a] bg-black shadow-[0_16px_44px_rgba(0,0,0,0.75)]">
        <TabStrip />
        <Toolbar />
        <div className="h-[2px] shrink-0 bg-[#626064]" />
        <div className="relative flex flex-1 overflow-hidden bg-[#fafafa]">
          <Sidebar />
          <main className="ml-[15px] mt-[14px] flex h-[1400px] w-[2106px] shrink-0 flex-col bg-white shadow-[0_0_5px_rgba(0,0,0,0.2)]">
            <div className="flex h-[124px] shrink-0 items-center pb-[4px] pl-[28px]">
              <Fit w={506} className="text-[40px] font-bold text-[#4b535d]">Vista general de tus viajes</Fit>
            </div>
            <WorldMap />
            <div className="ml-[220px] mt-[53px] flex gap-[204px]">
              <Filters title="Operaciones por mes" w={419} />
              <Filters title="Distribución por naviera" w={474} />
            </div>
          </main>
          <button className="absolute bottom-[35px] right-[35px] flex size-[65px] flex-col items-center justify-center gap-[5px] bg-[#9c27b0]">
            <span className="h-[3px] w-[28px] rounded bg-white" />
            <span className="h-[3px] w-[28px] rounded bg-white" />
            <span className="h-[3px] w-[28px] rounded bg-white" />
          </button>
        </div>
      </div>
      <Dock />
    </div>
  );
}
